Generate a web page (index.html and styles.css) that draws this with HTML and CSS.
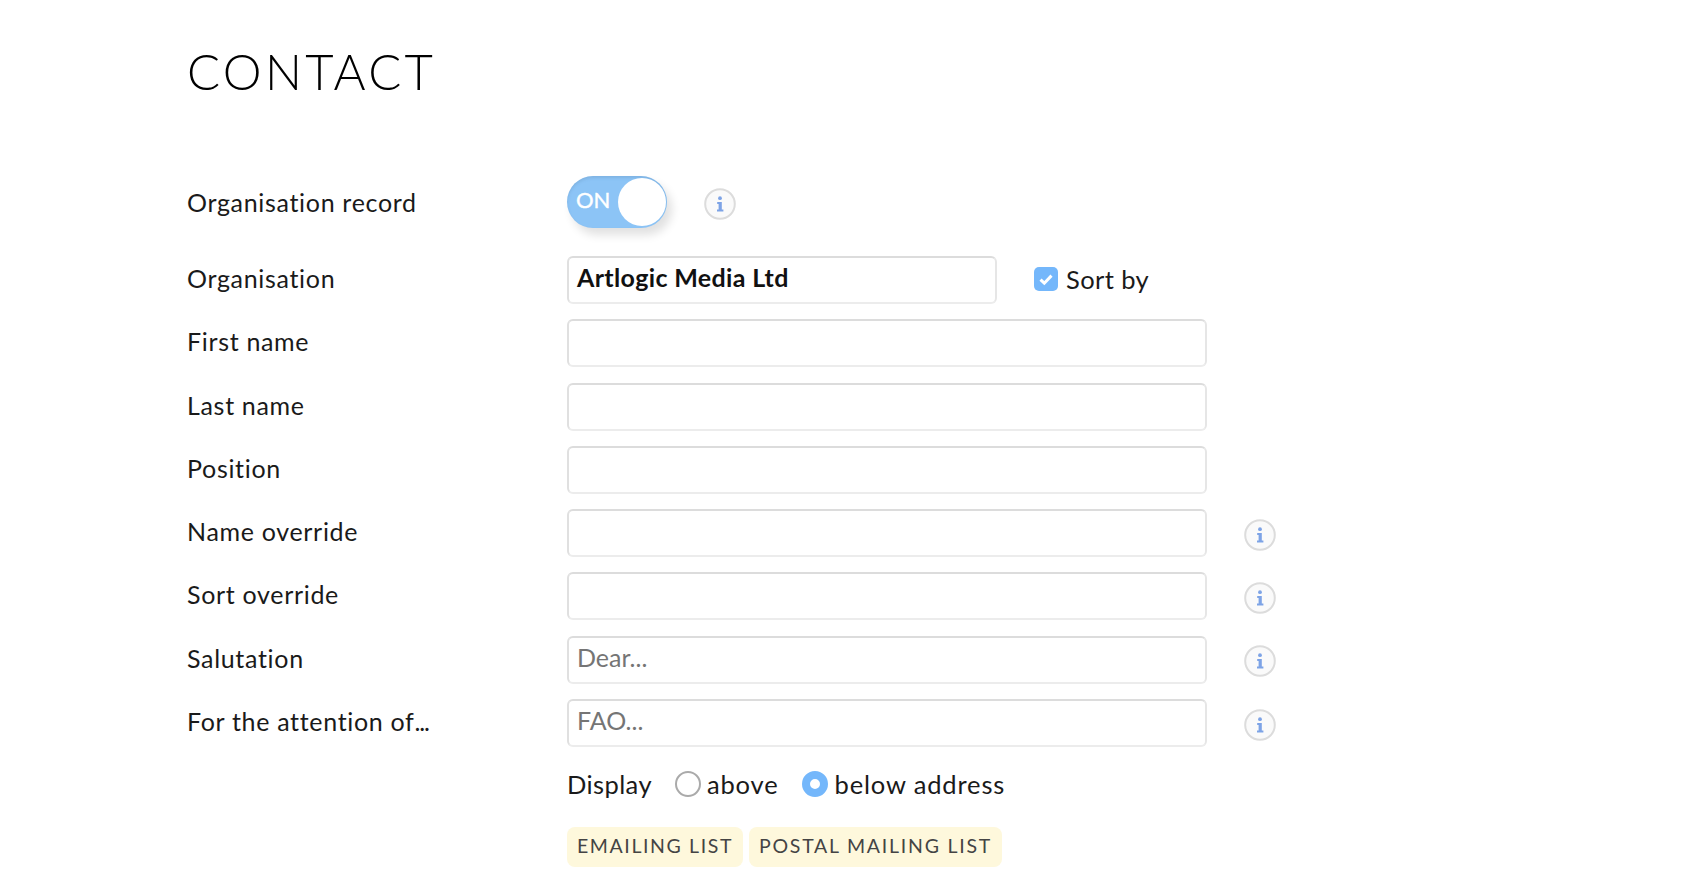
FILE: index.html
```html
<!DOCTYPE html>
<html lang="en">
<head>
<meta charset="utf-8">
<title>Contact</title>
<link rel="stylesheet" href="styles.css">
</head>
<body>
<main class="page">
  <h1 class="title">CONTACT</h1>
  <form class="form">
    <div class="row row-toggle">
      <label class="label">Organisation record</label>
      <div class="toggle"><span class="toggle-text">ON</span><span class="knob"></span></div>
      <svg class="info info-toggle" viewBox="0 0 32 32"><use href="#i"/></svg>
    </div>
    <div class="row row-org">
      <label class="label">Organisation</label>
      <div class="input input-short input-bold">Artlogic Media Ltd</div>
      <span class="check"><svg viewBox="0 0 24 24" class="check-box"><rect width="24" height="24" rx="5" fill="#74b7fb"/><path d="M6.5 12.6l3.8 3.6 7.2-7.6" fill="none" stroke="#fff" stroke-width="3"/></svg><span>Sort by</span></span>
    </div>
    <div class="row"><label class="label">First name</label><div class="input"></div></div>
    <div class="row"><label class="label">Last name</label><div class="input"></div></div>
    <div class="row"><label class="label">Position</label><div class="input"></div></div>
    <div class="row"><label class="label">Name override</label><div class="input"></div><svg class="info" viewBox="0 0 32 32"><use href="#i"/></svg></div>
    <div class="row"><label class="label">Sort override</label><div class="input"></div><svg class="info" viewBox="0 0 32 32"><use href="#i"/></svg></div>
    <div class="row"><label class="label">Salutation</label><div class="input input-ph">Dear...</div><svg class="info" viewBox="0 0 32 32"><use href="#i"/></svg></div>
    <div class="row"><label class="label">For the attention of<span class="dots">...</span></label><div class="input input-ph">FAO...</div><svg class="info" viewBox="0 0 32 32"><use href="#i"/></svg></div>
    <div class="row row-display">
      <span class="label"></span>
      <span class="display-label">Display</span>
      <span class="radio"></span><span class="radio-text">above</span>
      <span class="radio radio-on"></span><span class="radio-text">below address</span>
    </div>
    <div class="row row-tags">
      <span class="label"></span>
      <span class="tag">EMAILING LIST</span>
      <span class="tag tag-wide">POSTAL MAILING LIST</span>
    </div>
  </form>
</main>
<svg class="defs" width="0" height="0">
  <symbol id="i" viewBox="0 0 32 32">
    <circle cx="16" cy="16" r="14.8" fill="#fafafa" stroke="#dcdcdc" stroke-width="2"/>
    <circle cx="16" cy="10.2" r="1.9" fill="#7da3e6"/>
    <path d="M13.2 14h4.6v7.6h1.6v1.9h-6.4v-1.9h1.6v-5.7h-1.4z" fill="#7da3e6"/>
  </symbol>
</svg>
</body>
</html>
```
FILE: styles.css
```css
html, body { margin: 0; padding: 0; background: #fff; }
body { font-family: "Lato", "Open Sans", sans-serif; color: #111; height: 876px; overflow: hidden; }
.page { padding: 0 0 0 187px; }
.title { margin: 0; padding-top: 41px; height: 94px; box-sizing: border-box; font-size: 49px; line-height: 60px; font-weight: 300; letter-spacing: 3.3px; color: #000; }
.form { margin-top: 82px; }
.row { display: flex; align-items: center; height: 48px; margin-bottom: 15.3px; }
.label { flex: 0 0 380px; font-size: 25px; letter-spacing: 0.68px; color: #1a1a1a; padding-bottom: 4px; }
.dots { letter-spacing: -1.2px; }
.input { width: 640px; height: 48px; box-sizing: border-box; border: 2px solid #e2e2e2; border-color: #dcdcdc #e6e6e6 #ececec #e0e0e0; border-radius: 6px; padding: 0 8px; font-size: 25px; line-height: 39px; }
.input-short { width: 430px; }
.input-bold { font-weight: 700; color: #111; letter-spacing: .35px; }
.input-ph { color: #757575; }
.info { width: 32px; height: 32px; margin-left: 37px; margin-top: 3px; }
.info-toggle { margin-left: 37px; margin-top: 3px; }
.defs { position: absolute; }
.row-toggle { height: 52px; margin-bottom: 28px; }
.row-toggle .label { padding-bottom: 0; padding-top: 0; }
.toggle { width: 100px; height: 52px; border-radius: 26px; background: #8cc4f6; position: relative; box-shadow: inset 0 2px 3px rgba(90,130,170,.25), 5px 7px 10px rgba(0,0,0,.12); }
.toggle-text { position: absolute; left: 9px; top: 10px; color: #fff; font-size: 22px; line-height: 28px; font-weight: 400; -webkit-text-stroke: .4px #fff; }
.knob { position: absolute; right: 1px; top: 2px; width: 48px; height: 48px; border-radius: 50%; background: #fff; }
.check { display: flex; align-items: center; margin-left: 37px; padding-bottom: 3px; font-size: 25.5px; letter-spacing: .4px; color: #1a1a1a; }
.check-box { width: 24px; height: 24px; margin-right: 8px; }
.row-display { height: 30px; margin-top: 21.6px; margin-bottom: 28px; font-size: 25.5px; letter-spacing: .4px; color: #1a1a1a; }
.display-label { margin-right: 23px; }
.radio-text { letter-spacing: .85px; }
.radio { width: 22px; height: 22px; border: 2px solid #aaa; border-radius: 50%; margin-right: 6px; }
.radio-on { width: 26px; height: 26px; box-sizing: border-box; border: 8px solid #74b7fb; background: #fff; margin-right: 7px; margin-left: 23px; }
.row-tags { height: 40px; gap: 6px; }
.row-tags .label { margin-right: -6px; padding: 0; }
.tag { height: 40px; box-sizing: border-box; padding: 0 10px; border-radius: 8px; background: #fef8dc; color: #444; font-size: 19.5px; line-height: 38px; letter-spacing: 1.6px; }
.tag-wide { letter-spacing: 1.76px; }
```
